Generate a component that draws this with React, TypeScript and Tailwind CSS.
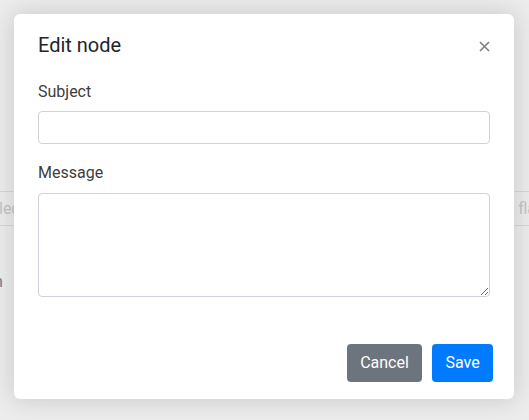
import React from 'react';

function BackgroundPage() {
  return (
    <div className="w-full h-full pt-[191px] font-['Roboto',sans-serif]">
      <div className="h-[35px] border-y border-[#d6d6d6] flex items-center justify-between overflow-hidden text-[16px] text-[#c4c4c4]">
        <span className="-ml-[19px]">Select</span>
        <span className="-mr-[16px]">on flag</span>
      </div>
      <div className="mt-[44px] -ml-[6px] text-[16px] text-[#6f7e90]">n</div>
    </div>
  );
}

function EditNodeModal() {
  return (
    <div className="absolute left-[14px] top-[14px] w-[500px] h-[385px] bg-white rounded-[6px] shadow-[0_0_24px_rgba(0,0,0,0.16)] flex flex-col font-['Roboto',sans-serif]">
      <div className="flex items-start justify-between pl-[24px] pr-[24px] pt-[16px]">
        <h5 className="text-[20px] leading-[30px] font-normal text-[#212529]">Edit node</h5>
        <button className="mt-[11px] text-[#808080] leading-none">
          <svg width="11" height="11" viewBox="0 0 11 11">
            <path d="M1 1L10 10M10 1L1 10" stroke="currentColor" strokeWidth="1.6" />
          </svg>
        </button>
      </div>
      <div className="px-[24px] pt-[20px] flex flex-col">
        <label className="text-[16px] leading-[24px] text-[#3d3d3d]">Subject</label>
        <input className="mt-[7px] h-[33px] w-full border border-[#ced4da] rounded-[4px] outline-none px-3" />
        <label className="mt-[17px] text-[16px] leading-[24px] text-[#3d3d3d]">Message</label>
        <textarea className="mt-[8px] h-[104px] w-full border border-[#ced4da] rounded-[4px] outline-none px-3 py-2 resize-y" />
      </div>
      <div className="mt-auto flex justify-end gap-[10px] pr-[21px] pb-[17px]">
        <button className="w-[75px] h-[38px] rounded-[4px] bg-[#6c757d] text-white text-[16px]">Cancel</button>
        <button className="w-[61px] h-[38px] rounded-[4px] bg-[#007bff] text-white text-[16px]">Save</button>
      </div>
    </div>
  );
}

export default function App() {
  return (
    <div className="relative w-[529px] h-[420px] overflow-hidden bg-[#ececec]">
      <BackgroundPage />
      <EditNodeModal />
    </div>
  );
}
